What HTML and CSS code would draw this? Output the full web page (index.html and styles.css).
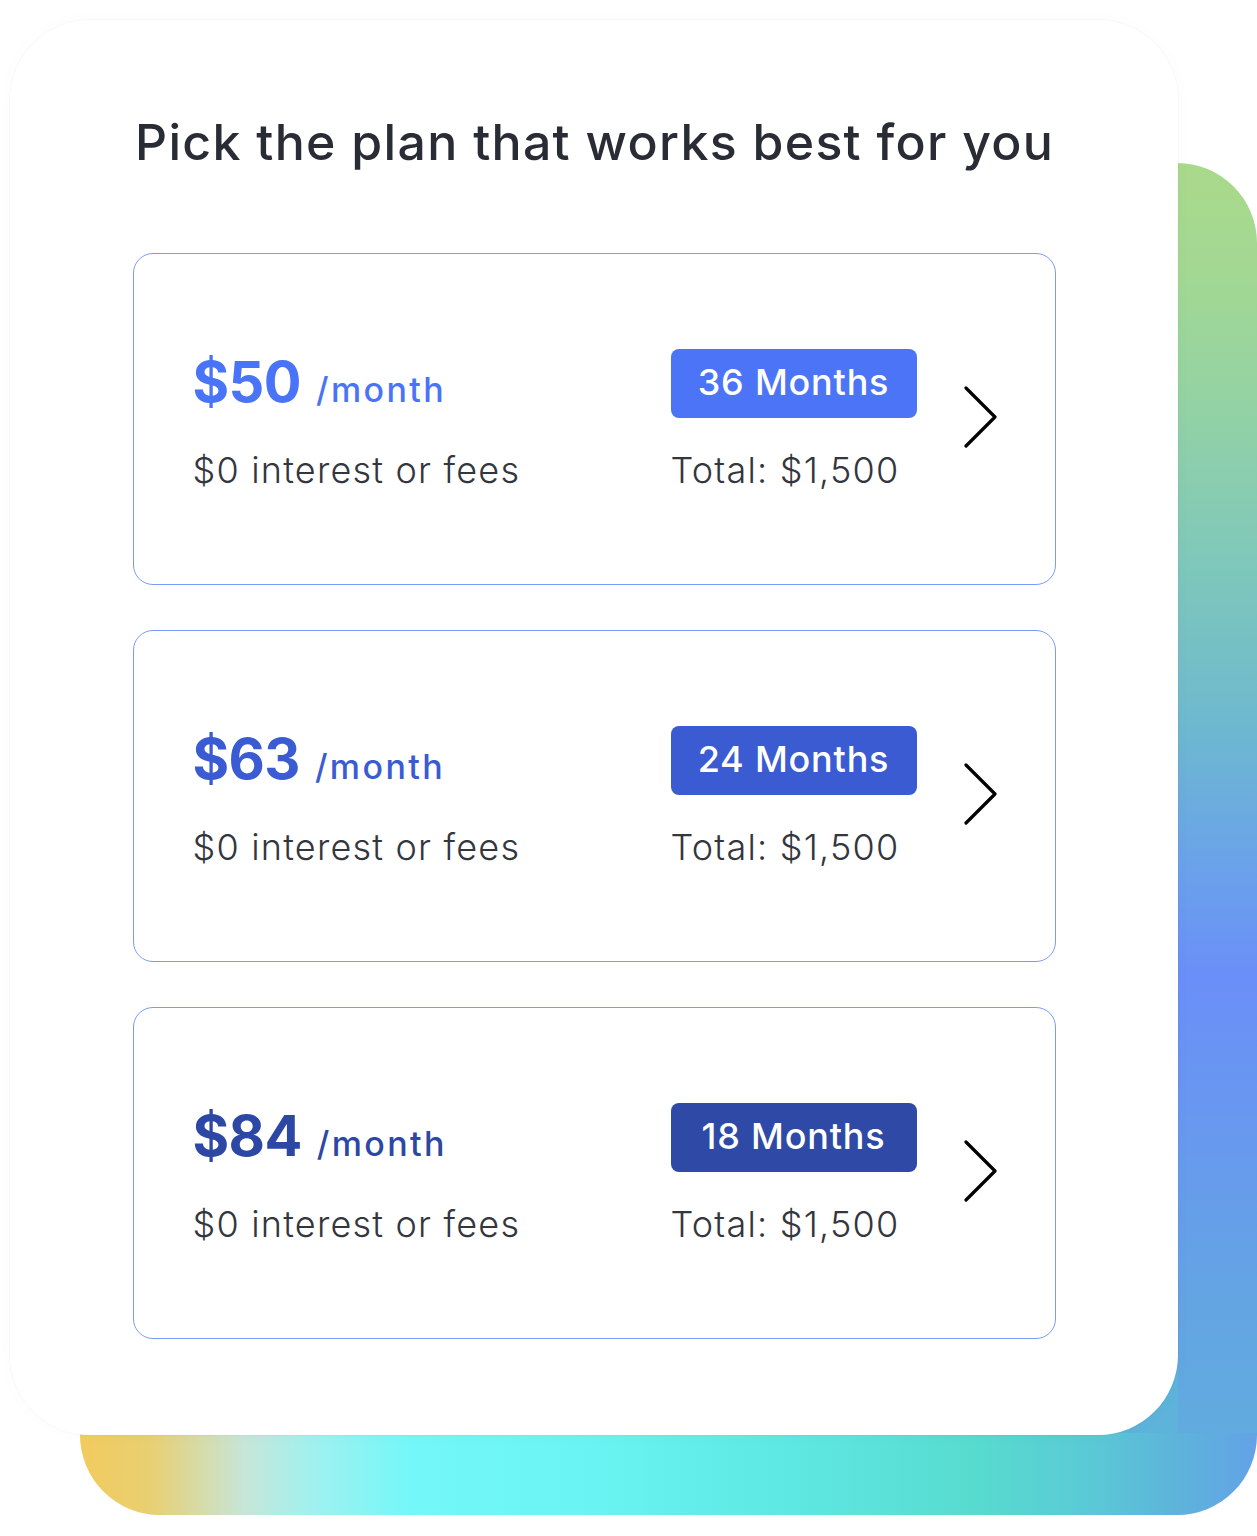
FILE: index.html
```html
<!DOCTYPE html>
<html lang="en">
<head>
<meta charset="utf-8">
<title>Pick a plan</title>
<link rel="stylesheet" href="styles.css">
</head>
<body>
<div class="stage">
  <div class="backdrop"></div>
  <section class="card">
    <h1 class="title">Pick the plan that works best for you</h1>
    <div class="plans">
      <a class="plan plan-1" href="#">
        <div class="plan-left">
          <div class="price"><span class="amount">$50</span><span class="per">/month</span></div>
          <div class="sub">$0 interest or fees</div>
        </div>
        <div class="plan-right">
          <div class="badge">36 Months</div>
          <div class="sub">Total: $1,500</div>
        </div>
        <svg class="chev" viewBox="0 0 34 62" width="34" height="62"><path d="M2 2 L31 31 L2 60" fill="none" stroke="#000" stroke-width="3.2" stroke-linecap="round" stroke-linejoin="round"/></svg>
      </a>
      <a class="plan plan-2" href="#">
        <div class="plan-left">
          <div class="price"><span class="amount">$63</span><span class="per">/month</span></div>
          <div class="sub">$0 interest or fees</div>
        </div>
        <div class="plan-right">
          <div class="badge">24 Months</div>
          <div class="sub">Total: $1,500</div>
        </div>
        <svg class="chev" viewBox="0 0 34 62" width="34" height="62"><path d="M2 2 L31 31 L2 60" fill="none" stroke="#000" stroke-width="3.2" stroke-linecap="round" stroke-linejoin="round"/></svg>
      </a>
      <a class="plan plan-3" href="#">
        <div class="plan-left">
          <div class="price"><span class="amount">$84</span><span class="per">/month</span></div>
          <div class="sub">$0 interest or fees</div>
        </div>
        <div class="plan-right">
          <div class="badge">18 Months</div>
          <div class="sub">Total: $1,500</div>
        </div>
        <svg class="chev" viewBox="0 0 34 62" width="34" height="62"><path d="M2 2 L31 31 L2 60" fill="none" stroke="#000" stroke-width="3.2" stroke-linecap="round" stroke-linejoin="round"/></svg>
      </a>
    </div>
  </section>
</div>
</body>
</html>
```

FILE: styles.css
```css
* { box-sizing: border-box; }
html, body { margin: 0; padding: 0; background: #ffffff; }
body { font-family: "Inter", "Lato", "Liberation Sans", sans-serif; color: #2a2c34; }

.stage {
  display: grid;
  grid-template-columns: 1257px;
  grid-template-rows: 1536px;
  width: 1257px;
  height: 1536px;
  overflow: hidden;
}

.backdrop {
  grid-area: 1 / 1;
  margin: 163px 0 0 80px;
  width: 1177px;
  height: 1352px;
  border-radius: 0 80px 80px 80px;
  background-color: #5db3da;
  background-image:
    linear-gradient(to right, #f2cb5e 0%, #e9cf72 6%, #c6e6d8 14%, #9ff1f0 20%, #74f7f8 28%, #6af4f3 42%, #5ee8e3 60%, #57dbcf 76%, #5ac9d6 86%, #5db4da 93%, #63a2e7 100%),
    linear-gradient(to bottom, #a9d98a 0%, #a3d893 8%, #93d2a4 18%, #7ec7bb 30%, #6db8d0 42%, #6aa2ea 52%, #6a8ff8 60%, #6897f0 70%, #63a4e3 84%, #5fafdc 100%);
  background-size: 100% 82px, 79px 100%;
  background-position: left bottom, right top;
  background-repeat: no-repeat;
}

.card {
  grid-area: 1 / 1;
  position: relative;
  z-index: 1;
  margin: 20px 0 0 10px;
  width: 1168px;
  height: 1415px;
  background: #ffffff;
  border-radius: 80px;
  box-shadow: 0 0 0 1px rgba(0, 0, 0, 0.02), 0 0 20px rgba(0, 0, 0, 0.02);
  padding: 92px 0 0 123px;
}

.title {
  margin: 0 0 81px 2px;
  font-size: 50px;
  line-height: 60px;
  font-weight: 500;
  color: #292c35;
  letter-spacing: 1.3px;
}

.plans {
  display: flex;
  flex-direction: column;
  gap: 45px;
  width: 923px;
}

.plan {
  display: grid;
  grid-template-columns: 478px 293px 34px;
  align-items: start;
  height: 332px;
  padding-left: 58.5px;
  border: 1.5px solid #7b9bfa;
  border-radius: 20px;
  text-decoration: none;
  color: inherit;
}

.plan-left, .plan-right {
  display: flex;
  flex-direction: column;
  align-items: flex-start;
}

.plan-left { margin-top: 100px; }
.plan-right { margin-top: 94.5px; }

.price {
  display: flex;
  align-items: baseline;
  line-height: 1;
  margin-bottom: 39px;
}

.amount {
  font-size: 56px;
  font-weight: 700;
  letter-spacing: -0.6px;
}

.per {
  font-size: 34px;
  font-weight: 500;
  margin-left: 15px;
  letter-spacing: 2.4px;
}

.sub {
  font-size: 36px;
  line-height: 1.2;
  font-weight: 300;
  color: #34363e;
  letter-spacing: 1.2px;
}

.badge {
  width: 246px;
  height: 69px;
  border-radius: 8px;
  color: #ffffff;
  font-size: 36px;
  font-weight: 500;
  line-height: 66px;
  text-align: center;
  letter-spacing: 0.8px;
  margin-bottom: 31px;
}

.chev { display: block; align-self: center; margin-top: -4px; }

.plan-1 .amount, .plan-1 .per { color: #4a74f7; }
.plan-1 .badge { background: #4b74f7; }
.plan-2 .amount, .plan-2 .per { color: #3a5bd2; }
.plan-2 .badge { background: #3a5bd2; }
.plan-3 .amount, .plan-3 .per { color: #2d47a4; }
.plan-3 .badge { background: #2e4aa6; }
```
